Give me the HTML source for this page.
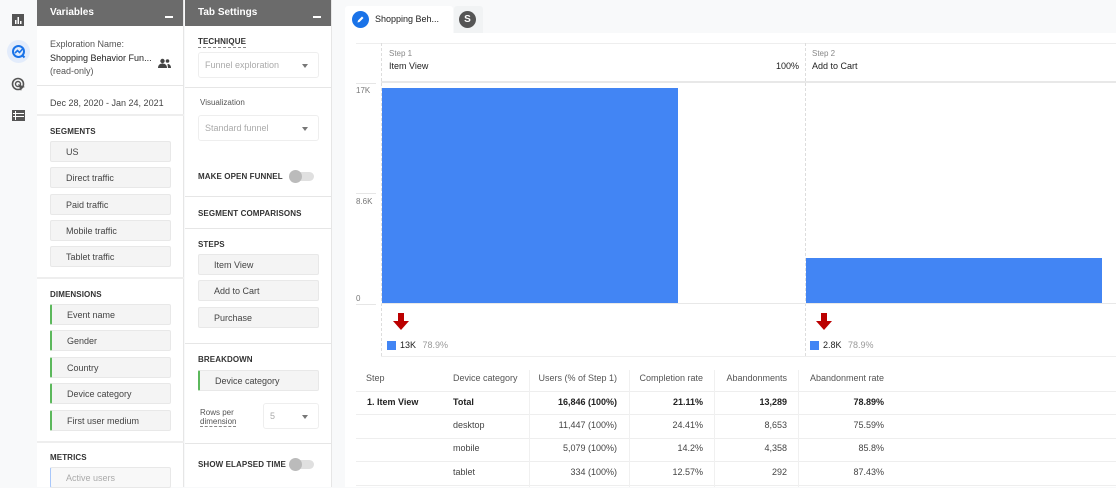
<!DOCTYPE html>
<html><head><meta charset="utf-8"><style>
*{margin:0;padding:0;box-sizing:border-box}
body{width:1116px;height:487px;overflow:hidden;background:#f8f9fa;font-family:"Liberation Sans",Arial,sans-serif;position:relative;color:#333}
.a{position:absolute}
.nav{left:0;top:0;width:37px;height:487px;background:#f8f9fa}
.panel{background:#fff;border-right:1px solid #e6e6e6}
.hdr{background:#6b6b6b;color:#fff;font-weight:bold;font-size:10px;height:26px;line-height:26px;padding-left:13px}
.hdr .m{position:absolute;right:10px;top:16px;width:8px;height:2px;background:#fff}
.sec{font-size:8px;font-weight:bold;color:#333;letter-spacing:.1px}
.chip{position:absolute;height:21px;background:#f4f4f4;border:1px solid #e8e8e8;font-size:9px;color:#444;line-height:20px;padding-left:15px;border-radius:2px}
.g{border-left:2px solid #5cb85c}
.sep{position:absolute;height:1px;background:#e6e6e6}
.sel{position:absolute;height:26px;border:1px solid #eee;border-radius:3px;font-size:9px;color:#aaa;line-height:24px;padding-left:6px}
.sel:after{content:"";position:absolute;right:10px;top:11px;border:3px solid transparent;border-top:4px solid #777}
.tog{position:absolute;width:23px;height:9px;border-radius:5px;background:#e0e0e0}
.tog:before{content:"";position:absolute;left:-2px;top:-2px;width:13px;height:13px;border-radius:50%;background:#bbb}
.t{position:absolute;font-size:9px;white-space:nowrap}
.r{text-align:right}
.dash{position:absolute;width:0;border-left:1px dashed #ddd}
.arrow{position:absolute;width:16px;height:17px}
</style></head><body>
<div class="a nav"></div>
<!-- nav icons -->
<svg class="a" style="left:11px;top:13px" width="14" height="14"><rect x="1" y="1" width="12" height="12" fill="#555"/><rect x="4" y="7" width="1.5" height="4" fill="#fff"/><rect x="6.5" y="4" width="1.5" height="7" fill="#fff"/><rect x="9" y="8" width="1.5" height="3" fill="#fff"/></svg>
<div class="a" style="left:7px;top:40px;width:23px;height:23px;border-radius:50%;background:#e3ecfb"></div>
<svg class="a" style="left:11px;top:44px" width="15" height="15"><circle cx="7.5" cy="7.5" r="5.5" fill="none" stroke="#1a73e8" stroke-width="2"/><path d="M4 9l2.5-2.5 2 2L11.5 5" fill="none" stroke="#1a73e8" stroke-width="1.6"/><path d="M11 11l2.5 2.5" stroke="#1a73e8" stroke-width="2"/></svg>
<svg class="a" style="left:11px;top:77px" width="15" height="15"><circle cx="7" cy="7" r="5.5" fill="none" stroke="#555" stroke-width="1.6"/><circle cx="7" cy="7" r="2.5" fill="none" stroke="#555" stroke-width="1.4"/><path d="M7 7l7 3-3 1-1 3z" fill="#555"/></svg>
<svg class="a" style="left:12px;top:110px" width="13" height="11"><rect x="0" y="0" width="13" height="11" fill="#555"/><path d="M1 3.5h11M1 6.5h11M3.5 1v9" stroke="#fff" stroke-width="1"/></svg>

<!-- Variables panel -->
<div class="a panel" style="left:37px;top:0;width:147px;height:487px">
<div class="hdr" style="position:relative">Variables<span class="m"></span></div>
</div>
<div class="t" style="left:50px;top:39px;color:#555">Exploration Name:</div>
<div class="t" style="left:50px;top:53px;color:#222">Shopping Behavior Fun...</div>
<svg class="a" style="left:158px;top:58px" width="13" height="10"><circle cx="4.5" cy="3" r="2.2" fill="#444"/><path d="M0 10c0-3 2-4.5 4.5-4.5S9 7 9 10z" fill="#444"/><circle cx="9.5" cy="3" r="1.8" fill="#444"/><path d="M9.5 6c2 0 3.5 1.3 3.5 4h-3z" fill="#444"/></svg>
<div class="t" style="left:50px;top:66px;color:#555">(read-only)</div>
<div class="sep" style="left:37px;top:85px;width:147px"></div>
<div class="t" style="left:50px;top:98px;color:#444">Dec 28, 2020 - Jan 24, 2021</div>
<div class="sep" style="left:37px;top:114px;width:147px;height:2px;background:#eee"></div>
<div class="sec a" style="left:50px;top:127px">SEGMENTS</div>
<div class="chip" style="left:50px;top:141px;width:121px">US</div>
<div class="chip" style="left:50px;top:167px;width:121px">Direct traffic</div>
<div class="chip" style="left:50px;top:194px;width:121px">Paid traffic</div>
<div class="chip" style="left:50px;top:220px;width:121px">Mobile traffic</div>
<div class="chip" style="left:50px;top:246px;width:121px">Tablet traffic</div>
<div class="sep" style="left:37px;top:277px;width:147px;height:2px;background:#eee"></div>
<div class="sec a" style="left:50px;top:290px">DIMENSIONS</div>
<div class="chip g" style="left:50px;top:304px;width:121px">Event name</div>
<div class="chip g" style="left:50px;top:330px;width:121px">Gender</div>
<div class="chip g" style="left:50px;top:357px;width:121px">Country</div>
<div class="chip g" style="left:50px;top:383px;width:121px">Device category</div>
<div class="chip g" style="left:50px;top:410px;width:121px">First user medium</div>
<div class="sep" style="left:37px;top:441px;width:147px;height:2px;background:#eee"></div>
<div class="sec a" style="left:50px;top:453px">METRICS</div>
<div class="chip" style="left:50px;top:467px;width:121px;border-left:1px solid #a8c7fa;color:#aaa;background:#f8f8f8">Active users</div>

<!-- Tab settings -->
<div class="a panel" style="left:185px;top:0;width:147px;height:487px">
<div class="hdr" style="position:relative">Tab Settings<span class="m"></span></div>
</div>
<div class="sec a" style="left:198px;top:37px;border-bottom:1px dashed #888;padding-bottom:1px">TECHNIQUE</div>
<div class="sel" style="left:198px;top:52px;width:121px">Funnel exploration</div>
<div class="sep" style="left:185px;top:87px;width:147px"></div>
<div class="t" style="left:200px;top:98px;color:#555;font-size:8px">Visualization</div>
<div class="sel" style="left:198px;top:115px;width:121px">Standard funnel</div>
<div class="sec a" style="left:198px;top:172px">MAKE OPEN FUNNEL</div>
<div class="tog" style="left:291px;top:172px"></div>
<div class="sep" style="left:185px;top:196px;width:147px"></div>
<div class="sec a" style="left:198px;top:209px">SEGMENT COMPARISONS</div>
<div class="sep" style="left:185px;top:228px;width:147px"></div>
<div class="sec a" style="left:198px;top:240px">STEPS</div>
<div class="chip" style="left:198px;top:254px;width:121px">Item View</div>
<div class="chip" style="left:198px;top:280px;width:121px">Add to Cart</div>
<div class="chip" style="left:198px;top:307px;width:121px">Purchase</div>
<div class="sep" style="left:185px;top:343px;width:147px"></div>
<div class="sec a" style="left:198px;top:355px">BREAKDOWN</div>
<div class="chip g" style="left:198px;top:370px;width:121px">Device category</div>
<div class="t" style="left:200px;top:408px;font-size:8px;color:#555;line-height:9px">Rows per<br><span style="border-bottom:1px dashed #888">dimension</span></div>
<div class="sel" style="left:263px;top:403px;width:56px">5</div>
<div class="sep" style="left:185px;top:443px;width:147px"></div>
<div class="sec a" style="left:198px;top:460px">SHOW ELAPSED TIME</div>
<div class="tog" style="left:291px;top:460px"></div>

<!-- Tabs -->
<div class="a" style="left:345px;top:6px;width:108px;height:27px;background:#fff;border-radius:3px 3px 0 0"></div>
<svg class="a" style="left:352px;top:11px" width="17" height="17"><circle cx="8.5" cy="8.5" r="8.5" fill="#1a73e8"/><path d="M5.5 11.5l.5-2 4-4 1.5 1.5-4 4z" fill="#fff"/></svg>
<div class="t" style="left:375px;top:14px;font-size:9px;color:#222">Shopping Beh...</div>
<div class="a" style="left:454px;top:6px;width:29px;height:27px;background:#f1f3f4;border-radius:3px 3px 0 0"></div>
<div class="a" style="left:459px;top:11px;width:17px;height:17px;border-radius:50%;background:#555;color:#fff;font-size:10px;font-weight:bold;text-align:center;line-height:17px">S</div>

<!-- Main card -->
<div class="a" style="left:345px;top:33px;width:771px;height:454px;background:#fff"></div>
<div class="sep" style="left:356px;top:43px;width:760px;background:#eee"></div>
<div class="sep" style="left:381px;top:81px;width:735px;height:2px;background:#e8e8e8"></div>
<div class="dash" style="left:381px;top:43px;height:313px"></div>
<div class="dash" style="left:805px;top:43px;height:313px"></div>
<div class="t" style="left:389px;top:49px;font-size:8px;color:#888">Step 1</div>
<div class="t" style="left:389px;top:61px;color:#222">Item View</div>
<div class="t" style="left:776px;top:61px;color:#222">100%</div>
<div class="t" style="left:812px;top:49px;font-size:8px;color:#888">Step 2</div>
<div class="t" style="left:812px;top:61px;color:#222">Add to Cart</div>
<div class="t" style="left:356px;top:86px;font-size:8px;color:#777">17K</div>
<div class="sep" style="left:356px;top:83px;width:20px"></div>
<div class="t" style="left:356px;top:197px;font-size:8px;color:#777">8.6K</div>
<div class="sep" style="left:356px;top:193px;width:20px"></div>
<div class="t" style="left:356px;top:294px;font-size:8px;color:#777">0</div>
<div class="sep" style="left:356px;top:304px;width:20px"></div>
<div class="a" style="left:382px;top:88px;width:296px;height:215px;background:#4285f4"></div>
<div class="a" style="left:806px;top:258px;width:296px;height:45px;background:#4285f4"></div>
<div class="sep" style="left:381px;top:303px;width:735px;background:#e8e8e8"></div>
<svg class="arrow" style="left:393px;top:313px" viewBox="0 0 16 17"><path d="M5 0h6v8h5l-8 9-8-9h5z" fill="#b00"/></svg>
<svg class="arrow" style="left:816px;top:313px" viewBox="0 0 16 17"><path d="M5 0h6v8h5l-8 9-8-9h5z" fill="#b00"/></svg>
<div class="a" style="left:387px;top:341px;width:9px;height:9px;background:#4285f4"></div>
<div class="t" style="left:400px;top:340px;color:#222">13K <span style="color:#999;margin-left:4px">78.9%</span></div>
<div class="a" style="left:810px;top:341px;width:9px;height:9px;background:#4285f4"></div>
<div class="t" style="left:823px;top:340px;color:#222">2.8K <span style="color:#999;margin-left:4px">78.9%</span></div>
<div class="sep" style="left:381px;top:356px;width:735px;background:#eee"></div>

<!-- Table -->
<div class="sep" style="left:356px;top:391px;width:760px;background:#eee"></div>
<div class="sep" style="left:356px;top:414px;width:760px;background:#eee"></div>
<div class="sep" style="left:356px;top:438px;width:760px;background:#eee"></div>
<div class="sep" style="left:356px;top:461px;width:760px;background:#eee"></div>
<div class="sep" style="left:356px;top:485px;width:760px;background:#eee"></div>
<div class="a" style="left:529px;top:370px;width:1px;height:117px;background:#f0f0f0"></div>
<div class="a" style="left:629px;top:370px;width:1px;height:117px;background:#f0f0f0"></div>
<div class="a" style="left:714px;top:370px;width:1px;height:117px;background:#f0f0f0"></div>
<div class="a" style="left:798px;top:370px;width:1px;height:117px;background:#f0f0f0"></div>
<div style="color:#555">
<div class="t" style="left:366px;top:373px">Step</div>
<div class="t" style="left:453px;top:373px">Device category</div>
<div class="t r" style="left:520px;width:97px;top:373px">Users (% of Step 1)</div>
<div class="t r" style="left:620px;width:83px;top:373px">Completion rate</div>
<div class="t r" style="left:700px;width:87px;top:373px">Abandonments</div>
<div class="t r" style="left:790px;width:94px;top:373px">Abandonment rate</div>
</div>
<div style="color:#222;font-weight:bold">
<div class="t" style="left:367px;top:397px">1. Item View</div>
<div class="t" style="left:453px;top:397px">Total</div>
<div class="t r" style="left:520px;width:97px;top:397px">16,846 (100%)</div>
<div class="t r" style="left:620px;width:83px;top:397px">21.11%</div>
<div class="t r" style="left:700px;width:87px;top:397px">13,289</div>
<div class="t r" style="left:790px;width:94px;top:397px">78.89%</div>
</div>
<div style="color:#444">
<div class="t" style="left:453px;top:420px">desktop</div>
<div class="t r" style="left:520px;width:97px;top:420px">11,447 (100%)</div>
<div class="t r" style="left:620px;width:83px;top:420px">24.41%</div>
<div class="t r" style="left:700px;width:87px;top:420px">8,653</div>
<div class="t r" style="left:790px;width:94px;top:420px">75.59%</div>
<div class="t" style="left:453px;top:443px">mobile</div>
<div class="t r" style="left:520px;width:97px;top:443px">5,079 (100%)</div>
<div class="t r" style="left:620px;width:83px;top:443px">14.2%</div>
<div class="t r" style="left:700px;width:87px;top:443px">4,358</div>
<div class="t r" style="left:790px;width:94px;top:443px">85.8%</div>
<div class="t" style="left:453px;top:467px">tablet</div>
<div class="t r" style="left:520px;width:97px;top:467px">334 (100%)</div>
<div class="t r" style="left:620px;width:83px;top:467px">12.57%</div>
<div class="t r" style="left:700px;width:87px;top:467px">292</div>
<div class="t r" style="left:790px;width:94px;top:467px">87.43%</div>
</div>
</body></html>
